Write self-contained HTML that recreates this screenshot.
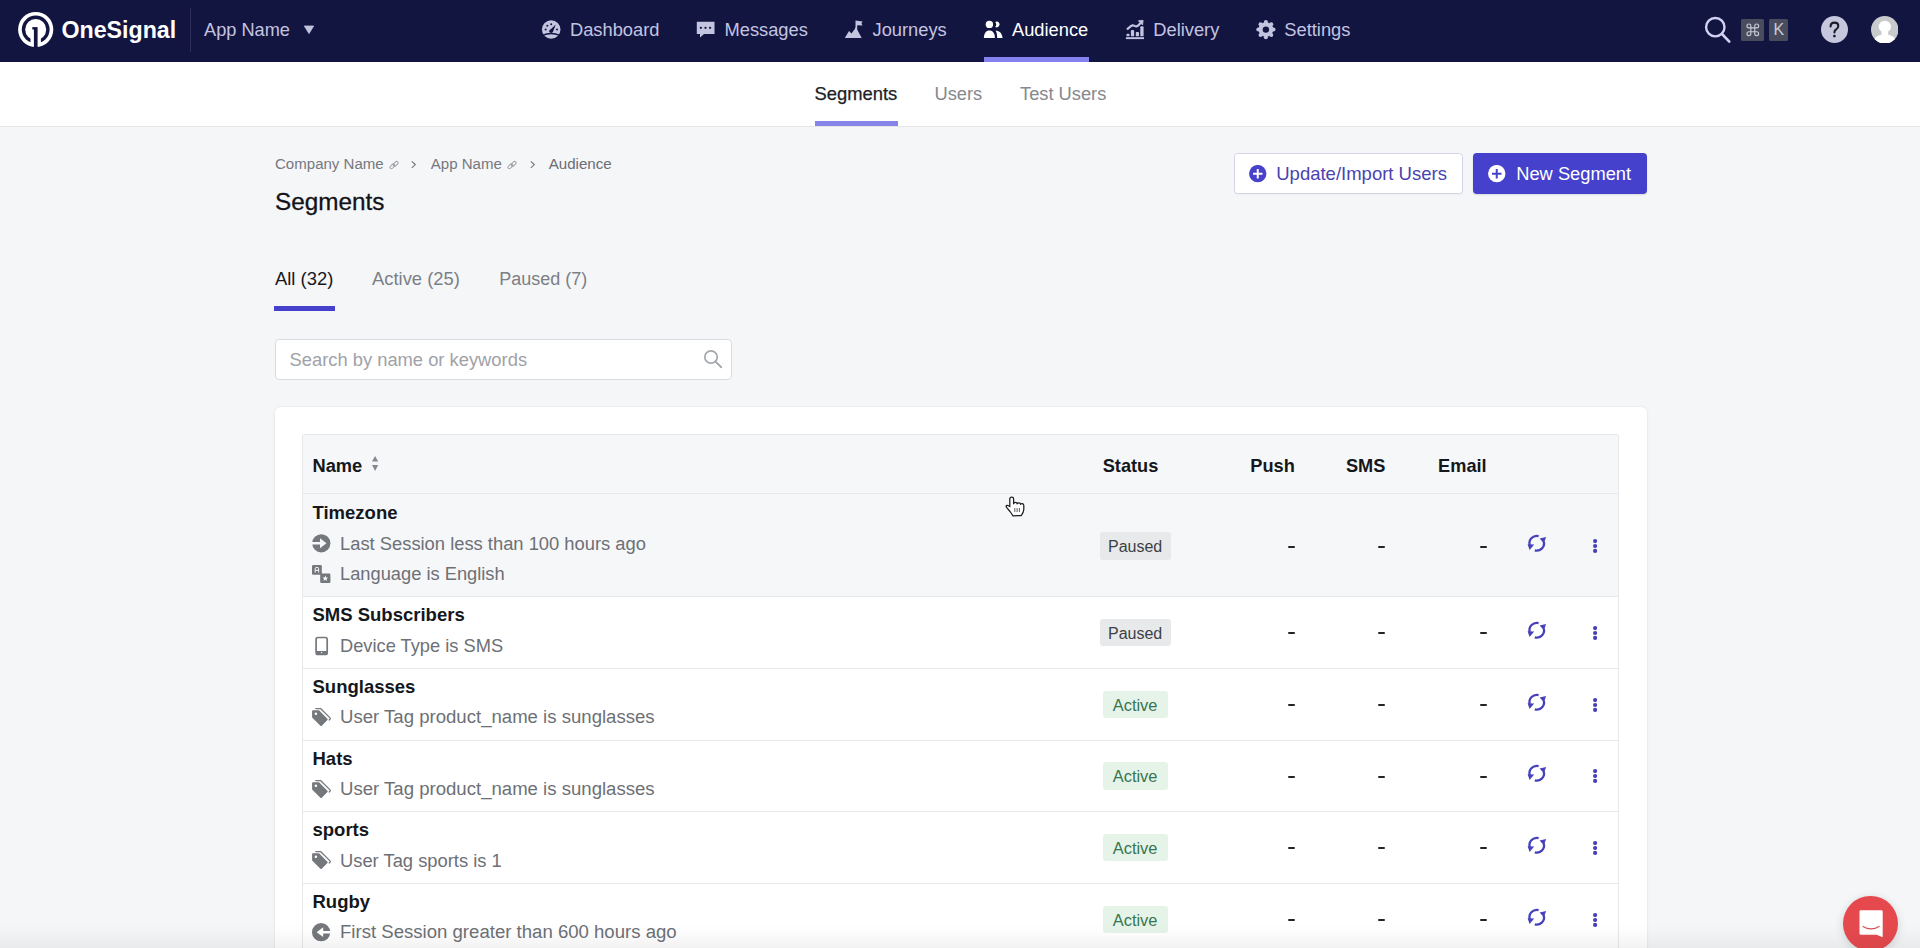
<!DOCTYPE html>
<html><head><meta charset="utf-8"><title>Segments</title>
<style>
html,body{margin:0;padding:0;width:1920px;height:948px;overflow:hidden;background:#f5f6f8;}
body{position:relative;font-family:"Liberation Sans", sans-serif;}
.t{position:absolute;line-height:1;white-space:nowrap;}
.r{position:absolute;display:block;}
</style></head><body>
<div class="r" style="left:0px;top:0px;width:1920px;height:948px;background:#f5f6f8"></div>
<div class="r" style="left:0px;top:0px;width:1920px;height:62px;background:#131541"></div>
<svg class="r" style="left:16px;top:10px;" width="40" height="40" viewBox="0 0 40 40">
<circle cx="19.7" cy="19.5" r="17.6" fill="#fff"/>
<circle cx="19.7" cy="19.5" r="13.9" fill="#131541"/>
<circle cx="19.7" cy="19.5" r="10.5" fill="#fff"/>
<path d="M14.5 27 L24.9 27 L24.9 35 L14.5 35 Z" fill="#fff"/>
<rect x="17.9" y="17.1" width="3.7" height="20.5" fill="#131541"/>
<rect x="16.3" y="17.1" width="2" height="2.4" fill="#131541"/>
</svg>
<div class="t" style="top:18.76px;font-size:23.2px;color:#ffffff;font-weight:700;left:61.50px;">OneSignal</div>
<div class="r" style="left:190px;top:8px;width:1px;height:44px;background:#2e2d5e"></div>
<div class="t" style="top:21.09px;font-size:18.2px;color:#c3c4e0;left:204.00px;">App Name</div>
<svg class="r" style="left:303px;top:25px;" width="12" height="10" viewBox="0 0 12 10"><path d="M1.3 1 L10.7 1 L6 8.6 Z" fill="#c3c4e0" stroke="#c3c4e0" stroke-width="0.8" stroke-linejoin="round"/></svg>
<svg class="r" style="left:541px;top:19px;" width="21" height="21" viewBox="0 0 21 21">
<circle cx="10.2" cy="10.5" r="9.3" fill="#c3c4e0"/>
<path d="M1.5 16.4 Q10.2 12.6 18.9 16.4" stroke="#131541" stroke-width="1.4" fill="none"/>
<path d="M8.4 11.4 L14.8 5.6 L11.8 13.2 Z" fill="#131541"/><circle cx="10.1" cy="12.3" r="1.8" fill="#131541"/>
<circle cx="10.2" cy="5.2" r="1" fill="#131541"/>
<circle cx="6.3" cy="6.8" r="1" fill="#131541"/>
<circle cx="4.6" cy="10.6" r="1" fill="#131541"/>
<circle cx="16" cy="10.6" r="1" fill="#131541"/>
</svg>
<div class="t" style="top:20.91px;font-size:18.3px;color:#c3c4e0;left:570.00px;">Dashboard</div>
<svg class="r" style="left:696px;top:21px;" width="20" height="18" viewBox="0 0 20 18">
<path d="M0.8 0.7 H18.5 V12.9 H8 L4 16.6 V12.9 H0.8 Z" fill="#c3c4e0"/>
<circle cx="4.9" cy="6.8" r="1.15" fill="#131541"/>
<circle cx="9.5" cy="6.8" r="1.15" fill="#131541"/>
<circle cx="14.1" cy="6.8" r="1.15" fill="#131541"/>
</svg>
<div class="t" style="top:20.91px;font-size:18.3px;color:#c3c4e0;left:724.50px;">Messages</div>
<svg class="r" style="left:844px;top:19px;" width="20" height="20" viewBox="0 0 20 20">
<path d="M0.8 19 L5 12 L7.5 14.5 L10.2 10.8 L13.3 10.8 L17.7 19 Z" fill="#c3c4e0"/>
<path d="M10 12 L11.5 8 L11.5 1.5 L18.5 2.5 L17.5 4.5 L18.5 6.5 L13.2 6.2 L13.2 12 Z" fill="#c3c4e0"/>
</svg>
<div class="t" style="top:20.91px;font-size:18.3px;color:#c3c4e0;left:872.50px;">Journeys</div>
<svg class="r" style="left:983px;top:20px;" width="20" height="19" viewBox="0 0 20 19">
<circle cx="6.4" cy="4.4" r="3.7" fill="#fff"/>
<path d="M12.2 1.9 A2.9 2.9 0 1 1 12.2 6.9 A3.9 3.9 0 0 0 12.2 1.9 Z" fill="#fff"/>
<path d="M0.9 18 C0.9 13 3.2 10.4 6.4 10.4 C9.6 10.4 11.9 13 11.9 18 Z" fill="#fff"/>
<path d="M12.6 10.4 C16.4 10.7 19.3 13.2 19.6 18 L14.2 18 C14.1 14.8 13.8 12.3 12.6 10.4 Z" fill="#fff"/>
</svg>
<div class="t" style="top:20.91px;font-size:18.3px;color:#ffffff;left:1012.00px;">Audience</div>
<div class="r" style="left:984px;top:57px;width:105px;height:5px;background:#8482f0"></div>
<svg class="r" style="left:1125px;top:19px;" width="21" height="22" viewBox="0 0 21 22">
<path d="M2.6 9.9 L5.9 7.2 Q7.6 5.8 9.6 6.9 Q11.4 7.9 13 6.6 L15.4 4.2" stroke="#c3c4e0" stroke-width="2.2" fill="none" stroke-linecap="round" stroke-linejoin="round"/>
<path d="M13.4 1.8 L18.1 1.3 L17.6 6 Z" fill="#c3c4e0" stroke="#c3c4e0" stroke-width="0.8" stroke-linejoin="round"/>
<rect x="1.4" y="14.8" width="3.2" height="2.5" rx="1.1" fill="#c3c4e0"/>
<rect x="5.9" y="11.1" width="3.2" height="6.2" rx="0.9" fill="#c3c4e0"/>
<rect x="10.8" y="13" width="3.2" height="4.3" rx="0.9" fill="#c3c4e0"/>
<rect x="15.3" y="7.3" width="3.3" height="10" rx="0.9" fill="#c3c4e0"/>
<rect x="0.9" y="18.2" width="18.1" height="1.9" fill="#c3c4e0"/>
</svg>
<div class="t" style="top:20.91px;font-size:18.3px;color:#c3c4e0;left:1153.30px;">Delivery</div>
<svg class="r" style="left:1256px;top:19px;" width="21" height="22" viewBox="0 0 21 22">
<circle cx="9.9" cy="10.6" r="7.4" fill="#c3c4e0"/>
<circle cx="9.90" cy="3.00" r="2.0" fill="#c3c4e0"/><circle cx="15.27" cy="5.23" r="2.0" fill="#c3c4e0"/><circle cx="17.50" cy="10.60" r="2.0" fill="#c3c4e0"/><circle cx="15.27" cy="15.97" r="2.0" fill="#c3c4e0"/><circle cx="9.90" cy="18.20" r="2.0" fill="#c3c4e0"/><circle cx="4.53" cy="15.97" r="2.0" fill="#c3c4e0"/><circle cx="2.30" cy="10.60" r="2.0" fill="#c3c4e0"/><circle cx="4.53" cy="5.23" r="2.0" fill="#c3c4e0"/>
<circle cx="9.9" cy="10.6" r="3.2" fill="#131541"/>
</svg>
<div class="t" style="top:20.91px;font-size:18.3px;color:#c3c4e0;left:1284.30px;">Settings</div>
<svg class="r" style="left:1701.6px;top:14.6px;" width="32" height="32" viewBox="0 0 32 32">
<circle cx="13.3" cy="12.2" r="9.2" stroke="#d2d1f4" stroke-width="2.4" fill="none"/>
<path d="M20 19 L27.3 26.6" stroke="#d2d1f4" stroke-width="2.6" stroke-linecap="round"/>
</svg>
<div class="r" style="left:1740.8px;top:18.5px;width:23.2px;height:22.2px;background:#484c5c;border-radius:1.5px"></div>
<svg class="r" style="left:1744.7px;top:22.0px;" width="15.6" height="15.6" viewBox="0 0 24 24"><path d="M15 6v12a3 3 0 1 0 3-3H6a3 3 0 1 0 3 3V6a3 3 0 1 0-3 3h12a3 3 0 1 0-3-3" stroke="#c8cad6" stroke-width="1.75" fill="none"/></svg>
<div class="r" style="left:1769px;top:18.5px;width:19px;height:22.2px;background:#484c5c;border-radius:1.5px"></div>
<div class="t" style="top:22.15px;font-size:16px;color:#c8cad6;left:1773.60px;">K</div>
<div class="r" style="left:1820.5px;top:15.7px;width:27.5px;height:27.5px;background:#c6c7dc;border-radius:50%"></div>
<svg class="r" style="left:1824px;top:19px;" width="21" height="21" viewBox="0 0 21 21"><path d="M6.6 7.4 Q6.6 3.6 10.4 3.6 Q14.3 3.6 14.3 7 Q14.3 9.2 12.2 10.4 Q10.4 11.4 10.4 13.4" stroke="#1b1c28" stroke-width="2.1" fill="none" stroke-linecap="round"/><circle cx="10.4" cy="17.1" r="1.4" fill="#1b1c28"/></svg>
<svg class="r" style="left:1870.8px;top:15.7px;" width="27.5" height="27.5" viewBox="0 0 27.5 27.5">
<defs><clipPath id="av"><circle cx="13.75" cy="13.75" r="13.75"/></clipPath></defs>
<circle cx="13.75" cy="13.75" r="13.75" fill="#c9cacc"/>
<g clip-path="url(#av)">
<ellipse cx="13.8" cy="10.6" rx="6.2" ry="5.9" fill="#fff"/><rect x="10.5" y="14" width="6.6" height="5" fill="#fff"/>
<path d="M1.5 29 C2.5 21.5 6.5 18.6 13.8 18.6 C21.1 18.6 25.1 21.5 26.1 29 Z" fill="#fff"/>
</g>
</svg>
<div class="r" style="left:0px;top:62px;width:1920px;height:64px;background:#ffffff"></div>
<div class="r" style="left:0px;top:126px;width:1920px;height:1px;background:#e4e6ea"></div>
<div class="t" style="top:85.12px;font-size:18.4px;color:#1d2024;left:814.50px;-webkit-text-stroke:0.25px #1d2024;">Segments</div>
<div class="r" style="left:814.5px;top:121px;width:83.5px;height:5px;background:#8783e9"></div>
<div class="t" style="top:85.21px;font-size:18.3px;color:#85888e;left:934.50px;">Users</div>
<div class="t" style="top:85.21px;font-size:18.3px;color:#85888e;left:1020.00px;">Test Users</div>
<div class="t" style="top:156.06px;font-size:15.05px;color:#75787e;left:275.00px;">Company Name</div>
<svg class="r" style="left:388.5px;top:159.5px;" width="10" height="10" viewBox="0 0 10 10"><g transform="rotate(45 5 5)"><rect x="3.9" y="0.2" width="2.9" height="5.6" rx="1.45" stroke="#9a9da3" stroke-width="0.95" fill="none"/><rect x="3.3" y="4.3" width="2.9" height="5.6" rx="1.45" stroke="#9a9da3" stroke-width="0.95" fill="none"/></g></svg>
<svg class="r" style="left:410.2px;top:160.4px;" width="8" height="10" viewBox="0 0 8 10"><path d="M1.8 1.4 L5.3 4.6 L1.8 7.8" stroke="#74777c" stroke-width="1.15" fill="none"/></svg>
<div class="t" style="top:156.06px;font-size:15.05px;color:#75787e;left:430.75px;">App Name</div>
<svg class="r" style="left:507px;top:159.5px;" width="10" height="10" viewBox="0 0 10 10"><g transform="rotate(45 5 5)"><rect x="3.9" y="0.2" width="2.9" height="5.6" rx="1.45" stroke="#9a9da3" stroke-width="0.95" fill="none"/><rect x="3.3" y="4.3" width="2.9" height="5.6" rx="1.45" stroke="#9a9da3" stroke-width="0.95" fill="none"/></g></svg>
<svg class="r" style="left:528.7px;top:160.4px;" width="8" height="10" viewBox="0 0 8 10"><path d="M1.8 1.4 L5.3 4.6 L1.8 7.8" stroke="#74777c" stroke-width="1.15" fill="none"/></svg>
<div class="t" style="top:156.01px;font-size:15.1px;color:#6a6d73;left:548.75px;">Audience</div>
<div class="t" style="top:189.93px;font-size:24.3px;color:#111318;left:275.00px;-webkit-text-stroke:0.3px #111318;">Segments</div>
<div class="r" style="left:1233.5px;top:153.25px;width:229.75px;height:40.5px;background:#fff;border:1px solid #d5d4e6;border-radius:3.5px;box-sizing:border-box;box-shadow:0 1px 1px rgba(0,0,0,0.03)"></div>
<svg class="r" style="left:1248.5px;top:165px;" width="18" height="18" viewBox="0 0 18 18"><circle cx="8.75" cy="8.65" r="8.7" fill="#4742c9"/><path d="M8.75 3.9 V13.4 M4 8.65 H13.5" stroke="#fff" stroke-width="2"/></svg>
<div class="t" style="top:165.04px;font-size:18.5px;color:#4a43b0;left:1276.25px;">Update/Import Users</div>
<div class="r" style="left:1473px;top:153.25px;width:173.75px;height:40.5px;background:#4541cc;border-radius:4px;box-shadow:0 1px 2px rgba(0,0,0,0.12)"></div>
<svg class="r" style="left:1487.5px;top:165px;" width="18" height="18" viewBox="0 0 18 18"><circle cx="8.75" cy="8.65" r="8.7" fill="#fff"/><path d="M8.75 3.9 V13.4 M4 8.65 H13.5" stroke="#4541cc" stroke-width="2"/></svg>
<div class="t" style="top:165.21px;font-size:18.3px;color:#ffffff;left:1516.25px;">New Segment</div>
<div class="t" style="top:269.92px;font-size:18.4px;color:#16181c;left:275.00px;">All (32)</div>
<div class="t" style="top:269.92px;font-size:18.4px;color:#7c7f85;left:372.00px;">Active (25)</div>
<div class="t" style="top:270.26px;font-size:18.0px;color:#7c7f85;left:499.25px;">Paused (7)</div>
<div class="r" style="left:274.25px;top:306.25px;width:60.75px;height:4.25px;background:#4541cd"></div>
<div class="r" style="left:275px;top:338.75px;width:456.75px;height:40.75px;background:#fff;border:1px solid #d9dbe0;border-radius:4px;box-sizing:border-box"></div>
<div class="t" style="top:350.71px;font-size:18.35px;color:#9fa2a8;left:289.50px;">Search by name or keywords</div>
<svg class="r" style="left:703px;top:349px;" width="21" height="20" viewBox="0 0 21 20"><circle cx="8" cy="8" r="6.2" stroke="#a4a7ac" stroke-width="1.7" fill="none"/><path d="M12.6 12.6 L18.3 18.2" stroke="#a4a7ac" stroke-width="1.9" stroke-linecap="round"/></svg>
<div class="r" style="left:275px;top:406.5px;width:1372px;height:560px;background:#fff;border-radius:6px;box-shadow:0 0 0 1px rgba(20,30,60,0.025),0 1px 4px rgba(20,30,60,0.05)"></div>
<div class="r" style="left:302px;top:434px;width:1317px;height:530px;background:#fff;border:1px solid #e6e8ec;border-top-left-radius:2px;border-top-right-radius:2px;box-sizing:border-box"></div>
<div class="r" style="left:303px;top:435px;width:1315px;height:58px;background:#f6f7f9;border-top-left-radius:1px;border-top-right-radius:1px"></div>
<div class="r" style="left:303px;top:493px;width:1315px;height:1px;background:#e6e8ec"></div>
<div class="t" style="top:456.91px;font-size:18.3px;color:#14171b;font-weight:700;left:312.50px;">Name</div>
<svg class="r" style="left:370px;top:455px;" width="10" height="18" viewBox="0 0 10 18"><path d="M2 6.6 L5.1 1 L8.2 6.6 Z M2 10 L5.1 16 L8.2 10 Z" fill="#85888d"/></svg>
<div class="t" style="top:457.19px;font-size:18.2px;color:#14171b;font-weight:700;left:1102.70px;">Status</div>
<div class="t" style="top:457.19px;font-size:18.2px;color:#14171b;font-weight:700;right:625.20px;text-align:right;">Push</div>
<div class="t" style="top:457.19px;font-size:18.2px;color:#14171b;font-weight:700;right:534.70px;text-align:right;">SMS</div>
<div class="t" style="top:457.19px;font-size:18.2px;color:#14171b;font-weight:700;right:433.40px;text-align:right;">Email</div>
<div class="r" style="left:303px;top:494px;width:1315px;height:102px;background:#f6f7f9"></div>
<div class="r" style="left:303px;top:596px;width:1315px;height:1px;background:#e6e8ec"></div>
<div class="t" style="top:503.64px;font-size:18.5px;color:#14171b;font-weight:700;left:312.50px;">Timezone</div>
<svg class="r" style="left:312px;top:534.3000000000001px;" width="20" height="20" viewBox="0 0 20 20"><circle cx="9.3" cy="9.3" r="9.1" fill="#74777c"/><path d="M0 8 H8 V4.3 L14.5 9.3 L8 14.3 V10.6 H0 Z" fill="#f6f7f9"/></svg>
<div class="t" style="top:534.56px;font-size:18.35px;color:#6d7076;left:340.00px;">Last Session less than 100 hours ago</div>
<svg class="r" style="left:312px;top:564.5000000000001px;" width="20" height="20" viewBox="0 0 20 20"><rect x="0" y="0" width="9.8" height="9.8" rx="1.2" fill="#74777c"/><path d="M3.2 7.5 V3.8 Q3.2 2.3 4.9 2.3 Q6.6 2.3 6.6 3.8 V7.5 M3.2 5.3 H6.6" stroke="#f6f7f9" stroke-width="1" fill="none"/><rect x="8.2" y="8.6" width="10.2" height="9.4" rx="1.2" fill="#74777c"/><path d="M13.3 10.6 L14.1 12.5 L16 12.6 L14.6 13.9 L15.1 15.9 L13.3 14.8 L11.5 15.9 L12 13.9 L10.6 12.6 L12.5 12.5 Z" fill="#f6f7f9"/></svg>
<div class="t" style="top:564.81px;font-size:18.3px;color:#6d7076;left:340.00px;">Language is English</div>
<div class="r" style="left:1099.6px;top:532.25px;width:71.8px;height:27.5px;background:#e8e9eb;border-radius:3px"></div>
<div class="t" style="top:538.95px;font-size:16px;color:#3c3f45;left:1108.00px;">Paused</div>
<div class="r" style="left:1287.8px;top:545.7px;width:7px;height:2px;background:#232529;border-radius:1px"></div>
<div class="r" style="left:1378.3px;top:545.7px;width:7px;height:2px;background:#232529;border-radius:1px"></div>
<div class="r" style="left:1479.6px;top:545.7px;width:7px;height:2px;background:#232529;border-radius:1px"></div>
<svg class="r" style="left:1526px;top:533.0px;" width="22" height="22" viewBox="0 0 22 22"><path d="M12.6 3.1 A7.3 7.3 0 0 0 3.7 12" stroke="#4741b9" stroke-width="2.3" fill="none" stroke-linecap="butt"/>
<path d="M1.6 11.2 L8.2 11.4 L3.6 17 Z" fill="#4741b9"/>
<path d="M8.8 17.4 A7.3 7.3 0 0 0 17.8 8.6" stroke="#4741b9" stroke-width="2.3" fill="none" stroke-linecap="butt"/>
<path d="M20.1 4.1 L13.6 5.5 L17.9 10.2 Z" fill="#4741b9"/></svg>
<svg class="r" style="left:1590px;top:536.0px;" width="10" height="20" viewBox="0 0 10 20"><circle cx="5.1" cy="5.1" r="2.1" fill="#4741b9"/><circle cx="5.1" cy="10.0" r="2.1" fill="#4741b9"/><circle cx="5.1" cy="14.9" r="2.1" fill="#4741b9"/></svg>
<div class="r" style="left:303px;top:668px;width:1315px;height:1px;background:#e6e8ec"></div>
<div class="t" style="top:605.94px;font-size:18.5px;color:#14171b;font-weight:700;left:312.50px;">SMS Subscribers</div>
<svg class="r" style="left:312px;top:636.3000000000001px;" width="20" height="20" viewBox="0 0 20 20"><rect x="4.1" y="1.5" width="11.1" height="16.9" rx="2" stroke="#74777c" stroke-width="1.7" fill="none"/><rect x="4" y="15" width="11.3" height="3.4" fill="#74777c"/><circle cx="9.6" cy="16.6" r="0.7" fill="#fff"/></svg>
<div class="t" style="top:636.62px;font-size:18.28px;color:#6d7076;left:340.00px;">Device Type is SMS</div>
<div class="r" style="left:1099.6px;top:618.95px;width:71.8px;height:27.5px;background:#e8e9eb;border-radius:3px"></div>
<div class="t" style="top:625.65px;font-size:16px;color:#3c3f45;left:1108.00px;">Paused</div>
<div class="r" style="left:1287.8px;top:632.4000000000001px;width:7px;height:2px;background:#232529;border-radius:1px"></div>
<div class="r" style="left:1378.3px;top:632.4000000000001px;width:7px;height:2px;background:#232529;border-radius:1px"></div>
<div class="r" style="left:1479.6px;top:632.4000000000001px;width:7px;height:2px;background:#232529;border-radius:1px"></div>
<svg class="r" style="left:1526px;top:619.7px;" width="22" height="22" viewBox="0 0 22 22"><path d="M12.6 3.1 A7.3 7.3 0 0 0 3.7 12" stroke="#4741b9" stroke-width="2.3" fill="none" stroke-linecap="butt"/>
<path d="M1.6 11.2 L8.2 11.4 L3.6 17 Z" fill="#4741b9"/>
<path d="M8.8 17.4 A7.3 7.3 0 0 0 17.8 8.6" stroke="#4741b9" stroke-width="2.3" fill="none" stroke-linecap="butt"/>
<path d="M20.1 4.1 L13.6 5.5 L17.9 10.2 Z" fill="#4741b9"/></svg>
<svg class="r" style="left:1590px;top:622.7px;" width="10" height="20" viewBox="0 0 10 20"><circle cx="5.1" cy="5.1" r="2.1" fill="#4741b9"/><circle cx="5.1" cy="10.0" r="2.1" fill="#4741b9"/><circle cx="5.1" cy="14.9" r="2.1" fill="#4741b9"/></svg>
<div class="r" style="left:303px;top:740px;width:1315px;height:1px;background:#e6e8ec"></div>
<div class="t" style="top:677.94px;font-size:18.5px;color:#14171b;font-weight:700;left:312.50px;">Sunglasses</div>
<svg class="r" style="left:312px;top:708.3000000000001px;" width="20" height="20" viewBox="0 0 20 20"><path d="M0.1 3.1 Q0.1 2.3 0.9 2.3 L7 2.3 L15.4 10.7 Q16.1 11.4 15.4 12.1 L9.8 17.7 Q9.1 18.4 8.4 17.7 L0.1 9.4 Z" fill="#74777c"/><circle cx="3.9" cy="5.8" r="1.3" fill="#fff"/><path d="M3.4 0.5 L8.6 0.5 L18 9.9 Q18.6 10.5 18 11.2 L16.8 12.4" stroke="#74777c" stroke-width="1.3" fill="none"/></svg>
<div class="t" style="top:708.37px;font-size:18.58px;color:#6d7076;left:340.00px;">User Tag product_name is sunglasses</div>
<div class="r" style="left:1102.5px;top:690.95px;width:65px;height:27.5px;background:#e6f3e9;border-radius:3px"></div>
<div class="t" style="top:696.71px;font-size:16.4px;color:#35764f;left:1112.80px;">Active</div>
<div class="r" style="left:1287.8px;top:704.4000000000001px;width:7px;height:2px;background:#232529;border-radius:1px"></div>
<div class="r" style="left:1378.3px;top:704.4000000000001px;width:7px;height:2px;background:#232529;border-radius:1px"></div>
<div class="r" style="left:1479.6px;top:704.4000000000001px;width:7px;height:2px;background:#232529;border-radius:1px"></div>
<svg class="r" style="left:1526px;top:691.7px;" width="22" height="22" viewBox="0 0 22 22"><path d="M12.6 3.1 A7.3 7.3 0 0 0 3.7 12" stroke="#4741b9" stroke-width="2.3" fill="none" stroke-linecap="butt"/>
<path d="M1.6 11.2 L8.2 11.4 L3.6 17 Z" fill="#4741b9"/>
<path d="M8.8 17.4 A7.3 7.3 0 0 0 17.8 8.6" stroke="#4741b9" stroke-width="2.3" fill="none" stroke-linecap="butt"/>
<path d="M20.1 4.1 L13.6 5.5 L17.9 10.2 Z" fill="#4741b9"/></svg>
<svg class="r" style="left:1590px;top:694.7px;" width="10" height="20" viewBox="0 0 10 20"><circle cx="5.1" cy="5.1" r="2.1" fill="#4741b9"/><circle cx="5.1" cy="10.0" r="2.1" fill="#4741b9"/><circle cx="5.1" cy="14.9" r="2.1" fill="#4741b9"/></svg>
<div class="r" style="left:303px;top:811px;width:1315px;height:1px;background:#e6e8ec"></div>
<div class="t" style="top:749.94px;font-size:18.5px;color:#14171b;font-weight:700;left:312.50px;">Hats</div>
<svg class="r" style="left:312px;top:780.3000000000001px;" width="20" height="20" viewBox="0 0 20 20"><path d="M0.1 3.1 Q0.1 2.3 0.9 2.3 L7 2.3 L15.4 10.7 Q16.1 11.4 15.4 12.1 L9.8 17.7 Q9.1 18.4 8.4 17.7 L0.1 9.4 Z" fill="#74777c"/><circle cx="3.9" cy="5.8" r="1.3" fill="#fff"/><path d="M3.4 0.5 L8.6 0.5 L18 9.9 Q18.6 10.5 18 11.2 L16.8 12.4" stroke="#74777c" stroke-width="1.3" fill="none"/></svg>
<div class="t" style="top:780.37px;font-size:18.58px;color:#6d7076;left:340.00px;">User Tag product_name is sunglasses</div>
<div class="r" style="left:1102.5px;top:762.45px;width:65px;height:27.5px;background:#e6f3e9;border-radius:3px"></div>
<div class="t" style="top:768.21px;font-size:16.4px;color:#35764f;left:1112.80px;">Active</div>
<div class="r" style="left:1287.8px;top:775.9000000000001px;width:7px;height:2px;background:#232529;border-radius:1px"></div>
<div class="r" style="left:1378.3px;top:775.9000000000001px;width:7px;height:2px;background:#232529;border-radius:1px"></div>
<div class="r" style="left:1479.6px;top:775.9000000000001px;width:7px;height:2px;background:#232529;border-radius:1px"></div>
<svg class="r" style="left:1526px;top:763.2px;" width="22" height="22" viewBox="0 0 22 22"><path d="M12.6 3.1 A7.3 7.3 0 0 0 3.7 12" stroke="#4741b9" stroke-width="2.3" fill="none" stroke-linecap="butt"/>
<path d="M1.6 11.2 L8.2 11.4 L3.6 17 Z" fill="#4741b9"/>
<path d="M8.8 17.4 A7.3 7.3 0 0 0 17.8 8.6" stroke="#4741b9" stroke-width="2.3" fill="none" stroke-linecap="butt"/>
<path d="M20.1 4.1 L13.6 5.5 L17.9 10.2 Z" fill="#4741b9"/></svg>
<svg class="r" style="left:1590px;top:766.2px;" width="10" height="20" viewBox="0 0 10 20"><circle cx="5.1" cy="5.1" r="2.1" fill="#4741b9"/><circle cx="5.1" cy="10.0" r="2.1" fill="#4741b9"/><circle cx="5.1" cy="14.9" r="2.1" fill="#4741b9"/></svg>
<div class="r" style="left:303px;top:883px;width:1315px;height:1px;background:#e6e8ec"></div>
<div class="t" style="top:820.94px;font-size:18.5px;color:#14171b;font-weight:700;left:312.50px;">sports</div>
<svg class="r" style="left:312px;top:851.3000000000001px;" width="20" height="20" viewBox="0 0 20 20"><path d="M0.1 3.1 Q0.1 2.3 0.9 2.3 L7 2.3 L15.4 10.7 Q16.1 11.4 15.4 12.1 L9.8 17.7 Q9.1 18.4 8.4 17.7 L0.1 9.4 Z" fill="#74777c"/><circle cx="3.9" cy="5.8" r="1.3" fill="#fff"/><path d="M3.4 0.5 L8.6 0.5 L18 9.9 Q18.6 10.5 18 11.2 L16.8 12.4" stroke="#74777c" stroke-width="1.3" fill="none"/></svg>
<div class="t" style="top:851.56px;font-size:18.35px;color:#6d7076;left:340.00px;">User Tag sports is 1</div>
<div class="r" style="left:1102.5px;top:833.95px;width:65px;height:27.5px;background:#e6f3e9;border-radius:3px"></div>
<div class="t" style="top:839.71px;font-size:16.4px;color:#35764f;left:1112.80px;">Active</div>
<div class="r" style="left:1287.8px;top:847.4000000000001px;width:7px;height:2px;background:#232529;border-radius:1px"></div>
<div class="r" style="left:1378.3px;top:847.4000000000001px;width:7px;height:2px;background:#232529;border-radius:1px"></div>
<div class="r" style="left:1479.6px;top:847.4000000000001px;width:7px;height:2px;background:#232529;border-radius:1px"></div>
<svg class="r" style="left:1526px;top:834.7px;" width="22" height="22" viewBox="0 0 22 22"><path d="M12.6 3.1 A7.3 7.3 0 0 0 3.7 12" stroke="#4741b9" stroke-width="2.3" fill="none" stroke-linecap="butt"/>
<path d="M1.6 11.2 L8.2 11.4 L3.6 17 Z" fill="#4741b9"/>
<path d="M8.8 17.4 A7.3 7.3 0 0 0 17.8 8.6" stroke="#4741b9" stroke-width="2.3" fill="none" stroke-linecap="butt"/>
<path d="M20.1 4.1 L13.6 5.5 L17.9 10.2 Z" fill="#4741b9"/></svg>
<svg class="r" style="left:1590px;top:837.7px;" width="10" height="20" viewBox="0 0 10 20"><circle cx="5.1" cy="5.1" r="2.1" fill="#4741b9"/><circle cx="5.1" cy="10.0" r="2.1" fill="#4741b9"/><circle cx="5.1" cy="14.9" r="2.1" fill="#4741b9"/></svg>
<div class="r" style="left:303px;top:955px;width:1315px;height:1px;background:#e6e8ec"></div>
<div class="t" style="top:892.94px;font-size:18.5px;color:#14171b;font-weight:700;left:312.50px;">Rugby</div>
<svg class="r" style="left:312px;top:923.3000000000001px;" width="20" height="20" viewBox="0 0 20 20"><circle cx="9.1" cy="9.2" r="9.1" fill="#74777c"/><path d="M18.5 8 H11.2 V4.3 L4.6 9.2 L11.2 14.1 V10.4 H18.5 Z" fill="#ffffff"/></svg>
<div class="t" style="top:923.37px;font-size:18.58px;color:#6d7076;left:340.00px;">First Session greater than 600 hours ago</div>
<div class="r" style="left:1102.5px;top:905.95px;width:65px;height:27.5px;background:#e6f3e9;border-radius:3px"></div>
<div class="t" style="top:911.71px;font-size:16.4px;color:#35764f;left:1112.80px;">Active</div>
<div class="r" style="left:1287.8px;top:919.4000000000001px;width:7px;height:2px;background:#232529;border-radius:1px"></div>
<div class="r" style="left:1378.3px;top:919.4000000000001px;width:7px;height:2px;background:#232529;border-radius:1px"></div>
<div class="r" style="left:1479.6px;top:919.4000000000001px;width:7px;height:2px;background:#232529;border-radius:1px"></div>
<svg class="r" style="left:1526px;top:906.7px;" width="22" height="22" viewBox="0 0 22 22"><path d="M12.6 3.1 A7.3 7.3 0 0 0 3.7 12" stroke="#4741b9" stroke-width="2.3" fill="none" stroke-linecap="butt"/>
<path d="M1.6 11.2 L8.2 11.4 L3.6 17 Z" fill="#4741b9"/>
<path d="M8.8 17.4 A7.3 7.3 0 0 0 17.8 8.6" stroke="#4741b9" stroke-width="2.3" fill="none" stroke-linecap="butt"/>
<path d="M20.1 4.1 L13.6 5.5 L17.9 10.2 Z" fill="#4741b9"/></svg>
<svg class="r" style="left:1590px;top:909.7px;" width="10" height="20" viewBox="0 0 10 20"><circle cx="5.1" cy="5.1" r="2.1" fill="#4741b9"/><circle cx="5.1" cy="10.0" r="2.1" fill="#4741b9"/><circle cx="5.1" cy="14.9" r="2.1" fill="#4741b9"/></svg>
<div class="r" style="left:1843.4px;top:896.2px;width:54.7px;height:54.7px;background:#e5494e;border-radius:50%;box-shadow:0 2px 10px rgba(0,0,0,0.15)"></div>
<svg class="r" style="left:1858px;top:909px;" width="26" height="30" viewBox="0 0 26 30"><path d="M1.5 2.6 Q1.5 1.2 2.9 1.2 L23.5 1.2 Q24.7 1.2 24.7 2.6 L24.7 28.3 L18.5 25.8 L2.9 25.8 Q1.5 25.8 1.5 24.4 Z" fill="#fff"/><path d="M4.6 17.2 Q13 22.6 21.5 17.2" stroke="#d85257" stroke-width="1.3" fill="none"/></svg>
<svg class="r" style="left:1004px;top:494px;" width="24" height="26" viewBox="0 0 24 26"><path d="M5.8 5 Q5.8 3.2 7.7 3.2 Q9.6 3.2 9.6 5 L9.6 9.8 Q10 8.3 11.5 8.3 Q13 8.3 13.2 9.8 Q13.6 8.8 15 8.8 Q16.4 8.8 16.6 10.3 Q17 9.5 18.3 9.7 Q19.8 10 19.8 11.5 L19.8 15.5 Q19.6 18.5 17.2 21.6 L9 21.8 Q7.8 20 6 17.5 L2.4 13.2 Q1.6 11.8 3 11.3 Q4.3 11 5.8 12.7 Z" fill="#fff" stroke="#1e1e1e" stroke-width="1.25" stroke-linejoin="round"/>
<path d="M10.8 14 V18 M13.1 14 V18 M15.4 14 V18" stroke="#333" stroke-width="0.8"/></svg>
<div class="r" style="left:0px;top:922px;width:1920px;height:26px;background:linear-gradient(to bottom, rgba(0,0,0,0), rgba(0,0,0,0.012) 40%, rgba(0,0,0,0.05))"></div>
</body></html>
